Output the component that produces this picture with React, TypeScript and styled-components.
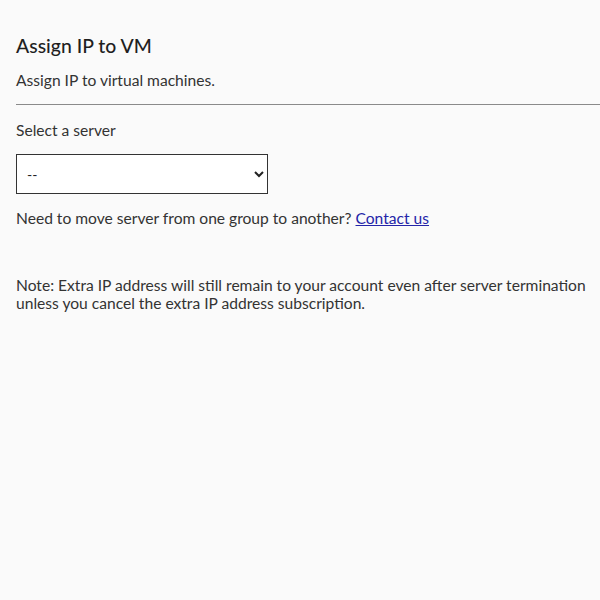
import React from "react";
import styled, { createGlobalStyle } from "styled-components";

const Global = createGlobalStyle`
  html, body { margin: 0; padding: 0; background: #fafafa; }
  body { font-family: "Lato", "Liberation Sans", sans-serif; color: #333; }
`;

const Page = styled.div`
  padding: 34px 0 0 16px;
  display: flex;
  flex-direction: column;
`;

const Title = styled.h3`
  margin: 0;
  font-size: 19.4px;
  line-height: 23px;
  font-weight: 500;
  color: #1f1f1f;
`;

const Text = styled.p<{ $mt: number }>`
  margin: ${(p) => p.$mt}px 0 0;
  font-size: 15.6px;
  line-height: 18px;
  color: #333;
`;

const Rule = styled.hr`
  margin: 15px 0 0;
  border: 0;
  height: 1px;
  background: #8a8a8a;
`;

const Select = styled.select`
  margin-top: 15px;
  width: 252px;
  height: 40px;
  box-sizing: border-box;
  border: 1px solid #333;
  border-radius: 0;
  background: #fff;
  padding: 0 6px;
  font-family: inherit;
  font-size: 14px;
  color: #222;
`;

const Link = styled.a`
  color: #2424a8;
  text-decoration: underline;
`;

export default function App() {
  return (
    <>
      <Global />
      <Page>
        <Title>Assign IP to VM</Title>
        <Text $mt={14}>Assign IP to virtual machines.</Text>
        <Rule />
        <Text $mt={16}>Select a server</Text>
        <Select defaultValue="">
          <option value="">--</option>
        </Select>
        <Text $mt={15}>
          Need to move server from one group to another? <Link href="#">Contact us</Link>
        </Text>
        <Text $mt={49}>
          Note: Extra IP address will still remain to your account even after server termination unless you cancel the extra IP address subscription.
        </Text>
      </Page>
    </>
  );
}
